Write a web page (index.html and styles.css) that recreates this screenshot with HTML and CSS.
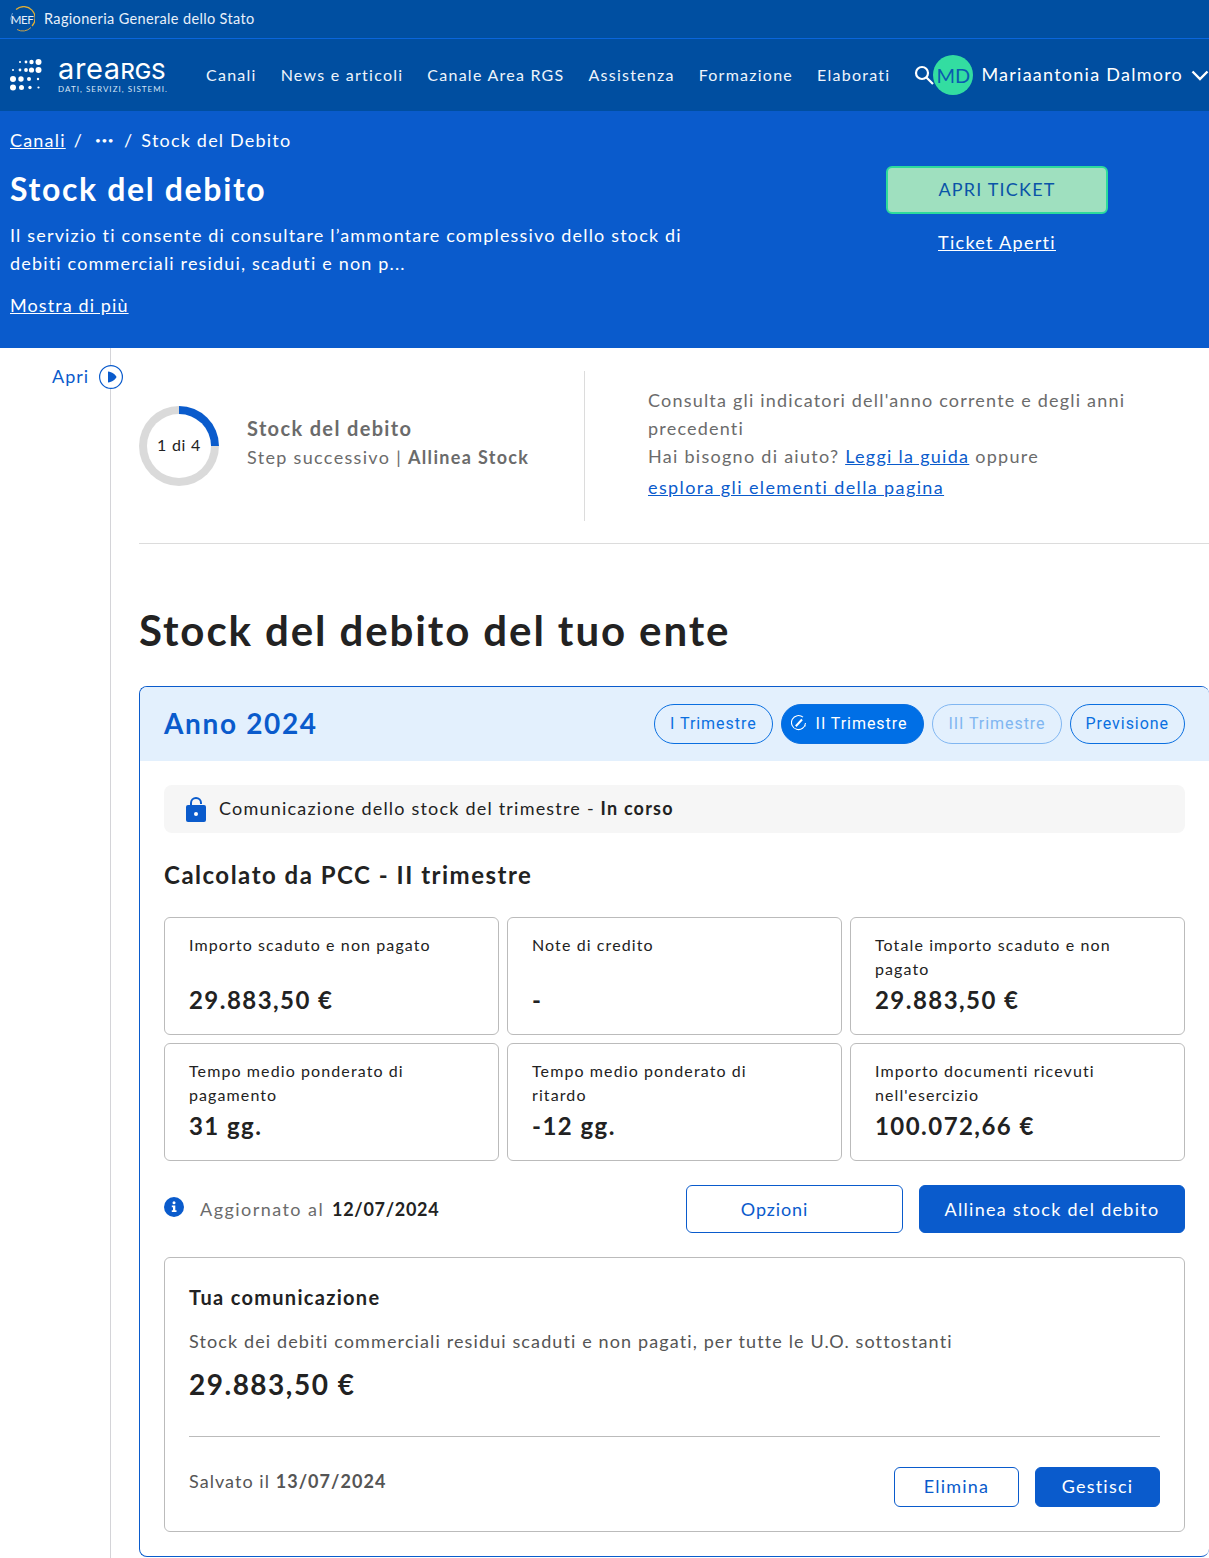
FILE: index.html
```html
<!DOCTYPE html>
<html>
<head>
    <title>Stock del debito</title>
    <link rel="stylesheet" href="styles.css">
</head>

<body>

<div class="top-bar">
    <svg class="mef-logo" width="26" height="26" viewBox="0 0 26 26">
        <path d="M7 3.500 A11.500 11.500 0 0 1 23 20" fill="none" stroke="#e0ae35" stroke-width="1.200"/>
        <path d="M22 21.500 A11.500 11.500 0 0 1 8 23.500" fill="none" stroke="#c9a24a" stroke-width="1"/>
        <path d="M3.500 7 A11.500 11.500 0 0 0 3 18" fill="none" stroke="#6f9ccf" stroke-width="1"/>
        <text x="13" y="17.500" text-anchor="middle">MEF</text>
    </svg>
    <span class="top-title">Ragioneria Generale dello Stato</span>
</div>

<header class="nav-bar">
    <svg class="dots-logo" width="32" height="32" viewBox="0 0 32 32" fill="#fff">
        <circle cx="10" cy="3" r="1"/><circle cx="16" cy="3" r="1.400"/><circle cx="21.500" cy="3" r="2.200"/><circle cx="28.500" cy="3" r="3"/>
        <circle cx="3" cy="11" r="1"/><circle cx="10" cy="11" r="1.400"/><circle cx="16" cy="11" r="1.900"/><circle cx="21.500" cy="11" r="2.600"/><circle cx="28.500" cy="11" r="3"/>
        <circle cx="3" cy="20" r="3"/><circle cx="11" cy="20" r="2.700"/><circle cx="19" cy="20" r="2"/><circle cx="28" cy="20" r="1.200"/>
        <circle cx="3" cy="28.500" r="3"/><circle cx="11.500" cy="28.500" r="2.500"/><circle cx="20" cy="28.500" r="1.700"/><circle cx="28.500" cy="28.500" r="1.100"/>
    </svg>
    <div class="brand">
        <div class="brand-name">area<b>RGS</b></div>
        <div class="brand-sub">DATI, SERVIZI, SISTEMI.</div>
    </div>
    <nav class="nav-links">
        <a>Canali</a>
        <a>News e articoli</a>
        <a>Canale Area RGS</a>
        <a>Assistenza</a>
        <a>Formazione</a>
        <a>Elaborati</a>
    </nav>
    <svg class="search-icon" width="20" height="20" viewBox="0 0 20 20" fill="none" stroke="#fff" stroke-width="2.200">
        <circle cx="8" cy="8" r="6"/>
        <path d="M12.500 12.500 L19 19"/>
    </svg>
    <div class="avatar">MD</div>
    <span class="user-name">Mariaantonia Dalmoro</span>
    <svg class="chevron" width="18" height="11" viewBox="0 0 18 11" fill="none" stroke="#fff" stroke-width="2.400">
        <path d="M1.500 1.500 L9 9 L16.500 1.500"/>
    </svg>
</header>

<section class="hero">
    <div class="hero-left">
        <div class="breadcrumb">
            <a>Canali</a><span class="sep">/</span><span class="more">•••</span><span class="sep">/</span><span>Stock del Debito</span>
        </div>
        <h1>Stock del debito</h1>
        <p>Il servizio ti consente di consultare l’ammontare complessivo dello stock di debiti commerciali residui, scaduti e non p...</p>
        <a class="show-more">Mostra di più</a>
    </div>
    <div class="hero-right">
        <button class="ticket-button">APRI TICKET</button>
        <a class="ticket-link">Ticket Aperti</a>
    </div>
</section>

<main class="page">
    <aside class="rail">
        <span class="rail-label">Apri</span>
        <svg class="rail-toggle" width="24" height="24" viewBox="0 0 24 24">
            <circle cx="12" cy="12" r="11.400" fill="#fff" stroke="#0a5bcc" stroke-width="1.200"/>
            <path d="M9 6.500 C13 7 16.500 9.500 17.500 12 C16.500 14.500 13 17 9 17.500 Z" fill="#0a5bcc"/>
        </svg>
    </aside>

    <div class="content">
        <section class="summary">
            <div class="summary-left">
                <div class="ring"><span>1 di 4</span></div>
                <div class="step">
                    <div class="step-title">Stock del debito</div>
                    <div class="step-next">Step successivo | <b>Allinea Stock</b></div>
                </div>
            </div>
            <div class="summary-right">
                <div>Consulta gli indicatori dell'anno corrente e degli anni precedenti</div>
                <div class="help">Hai bisogno di aiuto? <a>Leggi la guida</a> oppure</div>
                <div class="explore"><a>esplora gli elementi della pagina</a></div>
            </div>
        </section>

        <h2 class="page-title">Stock del debito del tuo ente</h2>

        <section class="year-card">
            <div class="year-head">
                <div class="year-title">Anno 2024</div>
                <div class="pills">
                    <span class="pill">I Trimestre</span>
                    <span class="pill active">
                        <svg width="16" height="16" viewBox="0 0 16 16" fill="none" stroke="#fff" stroke-width="1.100">
                            <path d="M12 2.200 A7 7 0 1 0 14.500 8"/>
                            <path d="M4.800 11.200 L11 4.500" stroke-width="2"/>
                            <path d="M14.400 10.500 L14 11.300"/>
                        </svg>
                        II Trimestre
                    </span>
                    <span class="pill disabled">III Trimestre</span>
                    <span class="pill">Previsione</span>
                </div>
            </div>

            <div class="year-body">
                <div class="status">
                    <svg width="20" height="25" viewBox="0 0 20 25">
                        <path d="M5 10 V6 A5 5 0 0 1 15 6 V7" fill="none" stroke="#0a5bcc" stroke-width="2"/>
                        <rect y="8" width="20" height="17" rx="2" fill="#0a5bcc"/>
                        <circle cx="10" cy="17" r="2" fill="#fff"/>
                    </svg>
                    <span>Comunicazione dello stock del trimestre - <b>In corso</b></span>
                </div>

                <h3 class="calc-title">Calcolato da PCC - II trimestre</h3>

                <div class="stats">
                    <div class="stat">
                        <div class="stat-label">Importo scaduto e non pagato</div>
                        <div class="stat-value">29.883,50 €</div>
                    </div>
                    <div class="stat">
                        <div class="stat-label">Note di credito</div>
                        <div class="stat-value">-</div>
                    </div>
                    <div class="stat">
                        <div class="stat-label">Totale importo scaduto e non pagato</div>
                        <div class="stat-value">29.883,50 €</div>
                    </div>
                    <div class="stat">
                        <div class="stat-label">Tempo medio ponderato di pagamento</div>
                        <div class="stat-value">31 gg.</div>
                    </div>
                    <div class="stat">
                        <div class="stat-label">Tempo medio ponderato di<br>ritardo</div>
                        <div class="stat-value">-12 gg.</div>
                    </div>
                    <div class="stat">
                        <div class="stat-label">Importo documenti ricevuti nell'esercizio</div>
                        <div class="stat-value">100.072,66 €</div>
                    </div>
                </div>

                <div class="update-row">
                    <svg class="info-icon" width="20" height="20" viewBox="0 0 20 20">
                        <circle cx="10" cy="10" r="10" fill="#0a5bcc"/>
                        <circle cx="10" cy="5.800" r="1.500" fill="#fff"/>
                        <path d="M7.800 8.500 H11.300 V13.300 H12.500 V15 H7.800 V13.300 H9 V10.200 H7.800 Z" fill="#fff"/>
                    </svg>
                    <span class="update-text">Aggiornato al</span>
                    <b class="update-date">12/07/2024</b>
                    <button class="btn btn-outline btn-options">Opzioni</button>
                    <button class="btn btn-solid btn-align">Allinea stock del debito</button>
                </div>

                <div class="comm-card">
                    <div class="comm-title">Tua comunicazione</div>
                    <div class="comm-text">Stock dei debiti commerciali residui scaduti e non pagati, per tutte le U.O. sottostanti</div>
                    <div class="comm-amount">29.883,50 €</div>
                    <div class="comm-foot">
                        <div class="saved">Salvato il <b>13/07/2024</b></div>
                        <button class="btn btn-outline btn-small">Elimina</button>
                        <button class="btn btn-solid btn-small">Gestisci</button>
                    </div>
                </div>
            </div>
        </section>
    </div>
</main>

</body>
</html>
```

FILE: styles.css
```css
* {
    box-sizing: border-box;
}

body {
    margin: 0;
    font-family: 'Lato', 'Open Sans', sans-serif;
    color: #222;
    background: #fff;
    overflow-x: hidden;
}

a {
    color: inherit;
}

/* top */
.top-bar {
    height: 39px;
    display: flex;
    align-items: center;
    padding-left: 9px;
    background: #004fa1;
    border-bottom: 1px solid #0a66dc;
    color: #e8f0fa;
}

.mef-logo text {
    font-family: 'Lato', sans-serif;
    font-size: 11.5px;
    letter-spacing: -0.4px;
    fill: #e8f0fa;
}

.top-title {
    margin-left: 9px;
    padding-bottom: 2px;
    font-size: 14.5px;
    letter-spacing: 0.35px;
}

.nav-bar {
    height: 72px;
    display: flex;
    align-items: center;
    padding-left: 10px;
    background: #004ea0;
    color: #fff;
}

.dots-logo {
    flex-shrink: 0;
}

.brand {
    margin-left: 16px;
    width: 148px;
    flex-shrink: 0;
}

.brand-name {
    font-family: 'Inter', sans-serif;
    font-size: 29px;
    line-height: 24px;
    letter-spacing: 0.6px;
}

.brand-name b {
    font-weight: 500;
    font-size: 22px;
    letter-spacing: 0;
}

.brand-sub {
    margin-top: 1px;
    font-size: 8px;
    line-height: 10px;
    letter-spacing: 1.05px;
    color: #d6e4f5;
}

.nav-links {
    display: flex;
    gap: 24px;
    padding-bottom: 2px;
    font-size: 16px;
    letter-spacing: 1.25px;
    color: #eef4fb;
    white-space: nowrap;
}

.search-icon {
    margin-left: 24px;
    flex-shrink: 0;
}

.avatar {
    width: 40px;
    height: 40px;
    margin-left: -1px;
    border-radius: 50%;
    background: #33dda1;
    color: #0a5bb0;
    font-size: 20px;
    display: flex;
    align-items: center;
    justify-content: center;
    flex-shrink: 0;
}

.user-name {
    margin-left: 8px;
    padding-bottom: 2px;
    font-size: 18px;
    letter-spacing: 1.25px;
    white-space: nowrap;
}

.chevron {
    margin-left: 8px;
    flex-shrink: 0;
}

/* hero */
.hero {
    height: 237px;
    display: flex;
    background: #0a5bcc;
    color: #fff;
    padding: 0 0 0 10px;
}

.hero-left {
    width: 876px;
    padding-top: 17px;
}

.breadcrumb {
    display: flex;
    align-items: center;
    height: 26px;
    padding-bottom: 2px;
    font-size: 18px;
    letter-spacing: 1.2px;
}

.breadcrumb a {
    text-decoration: underline;
}

.sep {
    margin: 0 8px;
}

.more {
    margin: 0 2px 0 4px;
    font-size: 10px;
    letter-spacing: 0.5px;
}

.hero h1 {
    margin: 15px 0 0;
    font-size: 32px;
    line-height: 40px;
    font-weight: 700;
    letter-spacing: 1.65px;
}

.hero p {
    width: 690px;
    margin: 12px 0 0;
    font-size: 18px;
    line-height: 28px;
    letter-spacing: 1.17px;
}

.show-more {
    display: block;
    margin-top: 14px;
    font-size: 18px;
    line-height: 28px;
    letter-spacing: 1.1px;
    text-decoration: underline;
}

.hero-right {
    padding-top: 55px;
    width: 222px;
    display: flex;
    flex-direction: column;
    align-items: center;
}

.ticket-button {
    width: 222px;
    height: 48px;
    padding-bottom: 3px;
    border: 2px solid #2ddb9c;
    border-radius: 6px;
    background: #9fe0bf;
    color: #0a54a8;
    font-family: inherit;
    font-size: 18px;
    letter-spacing: 1.2px;
}

.ticket-link {
    margin-top: 14px;
    font-size: 18px;
    line-height: 28px;
    letter-spacing: 1.3px;
    text-decoration: underline;
}

/* page */
.page {
    display: flex;
    height: 1210px;
}

.rail {
    position: relative;
    width: 111px;
    flex-shrink: 0;
    border-right: 1px solid #d4d4d8;
}

.rail-label {
    position: absolute;
    top: 16px;
    left: 52px;
    font-size: 18px;
    line-height: 24px;
    letter-spacing: 1px;
    color: #0a5bcc;
}

.rail-toggle {
    position: absolute;
    top: 17px;
    left: 99px;
}

.content {
    flex: 1;
    min-width: 0;
    padding: 23px 0 0 28px;
}

.summary {
    display: flex;
    height: 173px;
    padding-bottom: 22px;
    border-bottom: 1px solid #dcdcdc;
}

.summary-left {
    width: 446px;
    flex-shrink: 0;
    display: flex;
    align-items: flex-start;
    padding-top: 35px;
    border-right: 1px solid #dcdcdc;
}

.ring {
    width: 80px;
    height: 80px;
    border-radius: 50%;
    background: conic-gradient(#0a5bcc 0 25%, #dadada 25% 100%);
    display: flex;
    align-items: center;
    justify-content: center;
    flex-shrink: 0;
}

.ring span {
    width: 64px;
    height: 64px;
    padding-bottom: 4px;
    border-radius: 50%;
    background: #fff;
    display: flex;
    align-items: center;
    justify-content: center;
    font-size: 16px;
    letter-spacing: 0.7px;
}

.step {
    margin-left: 28px;
    padding-top: 8px;
    color: #6b6b6b;
}

.step-title {
    font-size: 20px;
    line-height: 28px;
    font-weight: 700;
    letter-spacing: 1.35px;
}

.step-next {
    margin-top: 1px;
    font-size: 18px;
    line-height: 28px;
    letter-spacing: 1.33px;
}

.summary-right {
    padding: 15px 0 0 63px;
    font-size: 18px;
    line-height: 28px;
    letter-spacing: 1.2px;
    color: #6b6b6b;
}

.summary-right a {
    color: #0a5bcc;
    text-decoration: underline;
}

.help {
    letter-spacing: 1.28px;
}

.explore {
    margin-top: 3px;
    letter-spacing: 1.38px;
}

.page-title {
    margin: 59px 0 0;
    font-size: 42px;
    line-height: 54px;
    font-weight: 700;
    letter-spacing: 1.9px;
}

/* anno */
.year-card {
    height: 871px;
    margin-top: 29px;
    border: 1px solid #0a5bcc;
    border-right-width: 0;
    border-radius: 8px;
    overflow: hidden;
}

.year-head {
    height: 74px;
    display: flex;
    align-items: center;
    justify-content: space-between;
    padding: 0 24px;
    background: #e3f0fd;
}

.year-title {
    padding-bottom: 2px;
    font-size: 28px;
    font-weight: 700;
    letter-spacing: 1.65px;
    color: #0a5bcc;
}

.pills {
    display: flex;
    gap: 8px;
}

.pill {
    height: 40px;
    display: flex;
    align-items: center;
    gap: 9px;
    padding: 0 15px 2px;
    border: 1px solid #0a6fe0;
    border-radius: 20px;
    font-family: 'Roboto', sans-serif;
    font-size: 16px;
    letter-spacing: 0.95px;
    color: #0a6fe0;
}

.pill.active {
    background: #006fe6;
    color: #fff;
    padding: 0 16px 2px 9px;
}

.pill.disabled {
    border-color: #80b6f1;
    color: #80b6f1;
}

.year-body {
    padding: 24px 24px 0;
}

.status {
    height: 48px;
    display: flex;
    align-items: center;
    gap: 13px;
    padding-left: 22px;
    border-radius: 8px;
    background: #f6f6f6;
    font-size: 18px;
    letter-spacing: 1.2px;
}

.status span {
    padding-bottom: 2px;
}

.calc-title {
    margin: 26px 0 0;
    font-size: 24px;
    line-height: 32px;
    font-weight: 700;
    letter-spacing: 1.5px;
}

.stats {
    display: grid;
    grid-template-columns: repeat(3, 1fr);
    grid-auto-rows: 118px;
    gap: 8px;
    margin-top: 26px;
}

.stat {
    display: flex;
    flex-direction: column;
    padding: 15px 24px 0;
    border: 1px solid #bbb;
    border-radius: 6px;
}

.stat-label {
    height: 48px;
    font-size: 16px;
    line-height: 24px;
    letter-spacing: 1.1px;
}

.stat-value {
    margin-top: 3px;
    font-size: 24px;
    line-height: 32px;
    font-weight: 700;
    letter-spacing: 1.45px;
}

.update-row {
    display: flex;
    align-items: center;
    height: 48px;
    margin-top: 24px;
}

.info-icon {
    margin-bottom: 5px;
}

.update-text {
    margin-left: 16px;
    font-size: 18px;
    letter-spacing: 1.45px;
    color: #6b6b6b;
}

.update-date {
    margin-left: 8px;
    font-size: 18px;
    letter-spacing: 0.7px;
}

.btn {
    font-family: inherit;
    border-radius: 6px;
    font-size: 18px;
    letter-spacing: 1.2px;
    border: 1px solid #0a5bcc;
}

.btn-outline {
    background: #fff;
    color: #0a5bcc;
}

.btn-solid {
    background: #0a5bcc;
    color: #fff;
}

.btn-options {
    width: 217px;
    height: 48px;
    margin-left: auto;
    padding-right: 46px;
    letter-spacing: 0.9px;
}

.btn-align {
    width: 266px;
    height: 48px;
    margin-left: 16px;
    letter-spacing: 1.3px;
}

.comm-card {
    height: 275px;
    margin-top: 24px;
    padding: 23px 24px 0;
    border: 1px solid #bbb;
    border-radius: 6px;
}

.comm-title {
    font-size: 20px;
    line-height: 32px;
    font-weight: 700;
    letter-spacing: 1.3px;
}

.comm-text {
    margin-top: 14px;
    font-size: 18px;
    line-height: 28px;
    letter-spacing: 1.12px;
    color: #555;
}

.comm-amount {
    margin-top: 8px;
    font-size: 28px;
    line-height: 42px;
    font-weight: 700;
    letter-spacing: 1.5px;
}

.comm-foot {
    display: flex;
    align-items: flex-start;
    gap: 16px;
    margin-top: 31px;
    padding-top: 30px;
    border-top: 1px solid #bbb;
}

.saved {
    flex: 1;
    font-size: 18px;
    line-height: 28px;
    letter-spacing: 1.05px;
    color: #555;
}

.btn-small {
    width: 125px;
    height: 40px;
    padding-bottom: 3px;
}
```
